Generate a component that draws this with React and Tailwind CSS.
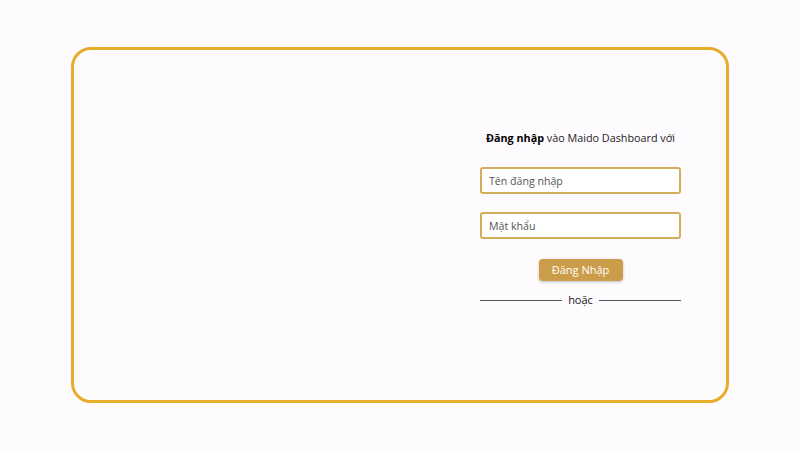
export default function App() {
    return (
        <div className="w-[800px] h-[450px] bg-[#fdfbfe] pt-[47px] pl-[71px]" style={{fontFamily: '"Open Sans", "Noto Sans", sans-serif'}}>
            <div className="w-[658px] h-[356px] border-[3px] border-[#e5ad2a] rounded-[20px] flex justify-end pr-[45px] pt-[79px]">
                <div className="w-[201px] flex flex-col items-center">
                    <p className="text-[10.8px] text-[#222] leading-[18px] whitespace-nowrap">
                        <span className="font-bold text-black">Đăng nhập</span> vào Maido Dashboard với
                    </p>
                    <input
                        type="text"
                        placeholder="Tên đăng nhập"
                        className="mt-[20px] w-full h-[27px] border-[2px] border-[#d3ae5a] rounded-[3px] px-[7px] text-[10.6px] bg-white placeholder:text-[#555] outline-none"
                    />
                    <input
                        type="password"
                        placeholder="Mật khẩu"
                        className="mt-[18px] w-full h-[27px] border-[2px] border-[#d3ae5a] rounded-[3px] px-[7px] text-[10.6px] bg-white placeholder:text-[#555] outline-none"
                    />
                    <button
                        type="button"
                        className="mt-[20px] w-[84px] h-[22px] bg-[#cb9d4b] text-white text-[11px] rounded-[4px] shadow-[0_1px_3px_rgba(0,0,0,0.25)]"
                    >
                        Đăng Nhập
                    </button>
                    <div className="mt-[12px] w-full flex items-center gap-[6px]">
                        <div className="flex-1 h-px bg-[#555]"></div>
                        <span className="text-[11px] text-[#111] leading-[14px]">hoặc</span>
                        <div className="flex-1 h-px bg-[#555]"></div>
                    </div>
                </div>
            </div>
        </div>
    );
}
